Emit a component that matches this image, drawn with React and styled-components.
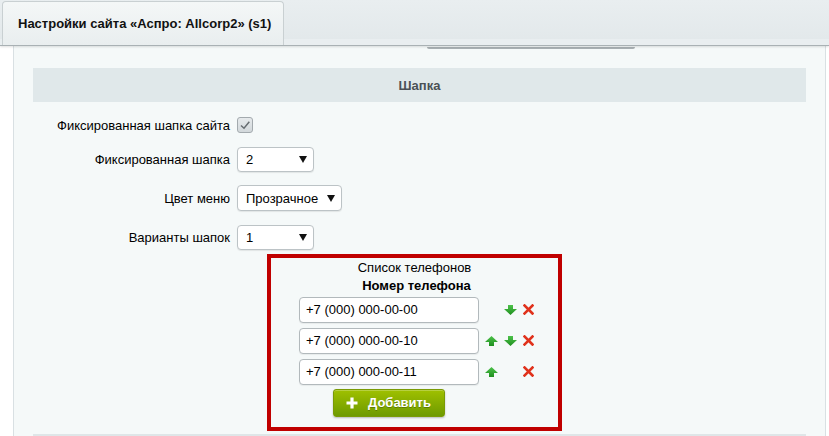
import React from "react";
import styled, { createGlobalStyle } from "styled-components";

const GlobalStyle = createGlobalStyle`
    html, body {
        margin: 0;
        padding: 0;
        background: #ffffff;
        font-family: "Liberation Sans", Arial, sans-serif;
        font-size: 13px;
        color: #000;
    }
`;

const phones = [
    { value: "+7 (000) 000-00-00", up: false, down: true },
    { value: "+7 (000) 000-00-10", up: true, down: true },
    { value: "+7 (000) 000-00-11", up: true, down: false },
];

const UpIcon = () => (
    <svg width="13" height="10" viewBox="0 0 13 10">
        <defs>
            <linearGradient id="gu" x1="0" y1="0" x2="0" y2="1">
                <stop offset="0" stopColor="#4cc24a" />
                <stop offset="1" stopColor="#1f8f1f" />
            </linearGradient>
        </defs>
        <path d="M6.5 0 L13 6 L9 6 L9 10 L4 10 L4 6 L0 6 Z" fill="url(#gu)" />
    </svg>
);

const DownIcon = () => (
    <svg width="13" height="10" viewBox="0 0 13 10">
        <defs>
            <linearGradient id="gd" x1="0" y1="0" x2="0" y2="1">
                <stop offset="0" stopColor="#4cc24a" />
                <stop offset="1" stopColor="#1f8f1f" />
            </linearGradient>
        </defs>
        <path d="M4 0 L9 0 L9 4 L13 4 L6.5 10 L0 4 L4 4 Z" fill="url(#gd)" />
    </svg>
);

const DeleteIcon = () => (
    <svg width="11" height="11" viewBox="0 0 11 11">
        <path d="M1.5 1.5 L9.5 9.5 M9.5 1.5 L1.5 9.5" stroke="#e0321c" strokeWidth="2.6" strokeLinecap="square" />
    </svg>
);

const CheckMark = () => (
    <svg width="12" height="12" viewBox="0 0 12 12">
        <path d="M2 6.5 L5 9.2 L10.3 2.8" stroke="#666d71" strokeWidth="1.5" fill="none" />
    </svg>
);

const PlusIcon = () => (
    <svg width="12" height="12" viewBox="0 0 12 12">
        <path d="M6 0.5 V11.5 M0.5 6 H11.5" stroke="#ffffff" strokeWidth="3.2" />
    </svg>
);

const CaretIcon = () => (
    <svg width="8" height="7" viewBox="0 0 8 7">
        <path d="M0 0 H8 L4 7 Z" fill="#111" />
    </svg>
);

const App = () => {
    return (
        <>
            <GlobalStyle />
            <TabBar>
                <Tab>Настройки сайта «Аспро: Allcorp2» (s1)</Tab>
            </TabBar>
            <Body>
                <Content>
                    <ScrollStub />
                    <SectionHeader>Шапка</SectionHeader>
                    <FormGrid>
                        <Label>Фиксированная шапка сайта</Label>
                        <Control>
                            <Checkbox>
                                <CheckMark />
                            </Checkbox>
                        </Control>

                        <Label>Фиксированная шапка</Label>
                        <Control>
                            <Select $width={77}>
                                <span>2</span>
                                <CaretIcon />
                            </Select>
                        </Control>

                        <Label>Цвет меню</Label>
                        <Control>
                            <Select $width={105} $height={26}>
                                <span>Прозрачное</span>
                                <CaretIcon />
                            </Select>
                        </Control>

                        <Label>Варианты шапок</Label>
                        <Control>
                            <Select $width={77}>
                                <span>1</span>
                                <CaretIcon />
                            </Select>
                        </Control>
                    </FormGrid>

                    <PhoneBox>
                        <BoxTitle>Список телефонов</BoxTitle>
                        <ColumnTitle>Номер телефона</ColumnTitle>
                        <PhoneTable>
                            {phones.map((p) => (
                                <React.Fragment key={p.value}>
                                    <PhoneInput defaultValue={p.value} />
                                    <IconCell>{p.up && <UpIcon />}</IconCell>
                                    <IconCell>{p.down && <DownIcon />}</IconCell>
                                    <IconCell>
                                        <DeleteIcon />
                                    </IconCell>
                                </React.Fragment>
                            ))}
                        </PhoneTable>
                        <AddButton type="button">
                            <PlusIcon />
                            Добавить
                        </AddButton>
                    </PhoneBox>
                    <NextSection />
                </Content>
            </Body>
        </>
    );
};

export default App;

const TabBar = styled.div`
    height: 45px;
    background: linear-gradient(#e9eef0, #e2e8ea);
    border-bottom: 1px solid #a9b1b4;
    box-shadow: inset 0 -6px 0 #e9eef0, 0 1px 2px rgba(0, 0, 0, 0.12);
    display: flex;
    align-items: flex-end;
    padding-left: 2px;
    position: relative;
    z-index: 1;
`;

const Tab = styled.div`
    box-sizing: border-box;
    height: 44px;
    width: 282px;
    padding: 0 0 0 15px;
    display: flex;
    align-items: center;
    white-space: nowrap;
    font-size: 13px;
    font-weight: bold;
    color: #111;
    background: linear-gradient(#f4f7f7, #e9eeef);
    border: 1px solid #c9d0d2;
    border-bottom: none;
    border-radius: 4px 4px 0 0;
`;

const Body = styled.div`
    display: flex;
    padding-left: 13px;
    padding-right: 3px;
`;

const Content = styled.div`
    flex: 1;
    min-height: 390px;
    background: #f5f9f9;
    border-left: 1px solid #d9e0e3;
    border-right: 1px solid #d9e0e3;
    padding: 1px 19px 0 19px;
`;

const ScrollStub = styled.div`
    width: 208px;
    height: 2px;
    margin-left: 394px;
    background: #a9b0b3;
    border-radius: 0 0 2px 2px;
`;

const SectionHeader = styled.div`
    margin-top: 19px;
    height: 34px;
    background: #e0e8ea;
    display: flex;
    align-items: center;
    justify-content: center;
    font-weight: bold;
    font-size: 13px;
    color: #4a5055;
`;

const FormGrid = styled.div`
    display: grid;
    grid-template-columns: 197px auto;
    column-gap: 7px;
    row-gap: 13.5px;
    margin-top: 15px;
    align-items: center;
`;

const Label = styled.div`
    text-align: right;
    font-size: 13px;
    color: #000;
`;

const Control = styled.div`
    display: flex;
    align-items: center;
`;

const Checkbox = styled.span`
    width: 14px;
    height: 14px;
    border: 1px solid #a3aaae;
    border-radius: 3px;
    background: linear-gradient(#e6eaec, #d2d8db);
    display: flex;
    align-items: center;
    justify-content: center;
`;

const Select = styled.div`
    box-sizing: border-box;
    width: ${(p) => p.$width}px;
    height: ${(p) => p.$height || 25}px;
    padding: 0 6px 0 8px;
    background: #ffffff;
    border: 1px solid #bcc3c6;
    border-radius: 4px;
    box-shadow: 0 1px 1px rgba(0, 0, 0, 0.08);
    display: flex;
    align-items: center;
    justify-content: space-between;
    font-size: 13px;
    color: #000;
`;

const PhoneBox = styled.div`
    box-sizing: border-box;
    width: 295px;
    height: 177px;
    margin: 4px 0 0 234px;
    border: 4px solid #c00000;
    padding: 1px 0 0 28px;
`;

const BoxTitle = styled.div`
    margin-left: -28px;
    text-align: center;
    line-height: 18px;
    font-size: 13px;
    color: #000;
`;

const ColumnTitle = styled.div`
    margin: 0 0 0 -28px;
    padding-left: 4px;
    text-align: center;
    line-height: 18px;
    font-size: 13px;
    font-weight: bold;
    color: #000;
`;

const PhoneTable = styled.div`
    display: grid;
    grid-template-columns: 180px 13px 13px 11px;
    column-gap: 6px;
    row-gap: 5px;
    margin-top: 2px;
    align-items: center;
`;

const PhoneInput = styled.input`
    box-sizing: border-box;
    width: 180px;
    height: 26px;
    padding: 0 6px;
    border: 1px solid #b2b9bc;
    border-radius: 4px;
    background: #ffffff;
    box-shadow: 0 1px 1px rgba(0, 0, 0, 0.06);
    font-family: "Liberation Sans", Arial, sans-serif;
    font-size: 13px;
    color: #000;
    outline: none;
`;

const IconCell = styled.span`
    display: flex;
    align-items: center;
    justify-content: center;
    height: 12px;
`;

const AddButton = styled.button`
    box-sizing: border-box;
    margin: 4px 0 0 34px;
    width: 112px;
    height: 28px;
    display: flex;
    align-items: center;
    gap: 10px;
    padding: 0 0 0 12px;
    border: 1px solid #7a9a05;
    border-radius: 3px;
    background: linear-gradient(#9fc000, #6e9a00);
    box-shadow: 0 1px 2px rgba(0, 0, 0, 0.25), inset 0 1px 0 rgba(255, 255, 255, 0.25);
    color: #ffffff;
    font-family: "Liberation Sans", Arial, sans-serif;
    font-size: 13px;
    font-weight: bold;
    text-shadow: 0 1px 0 rgba(0, 0, 0, 0.25);
    cursor: pointer;
`;

const NextSection = styled.div`
    margin-top: 3px;
    height: 20px;
    border-top: 2px solid #dfe6e8;
`;
